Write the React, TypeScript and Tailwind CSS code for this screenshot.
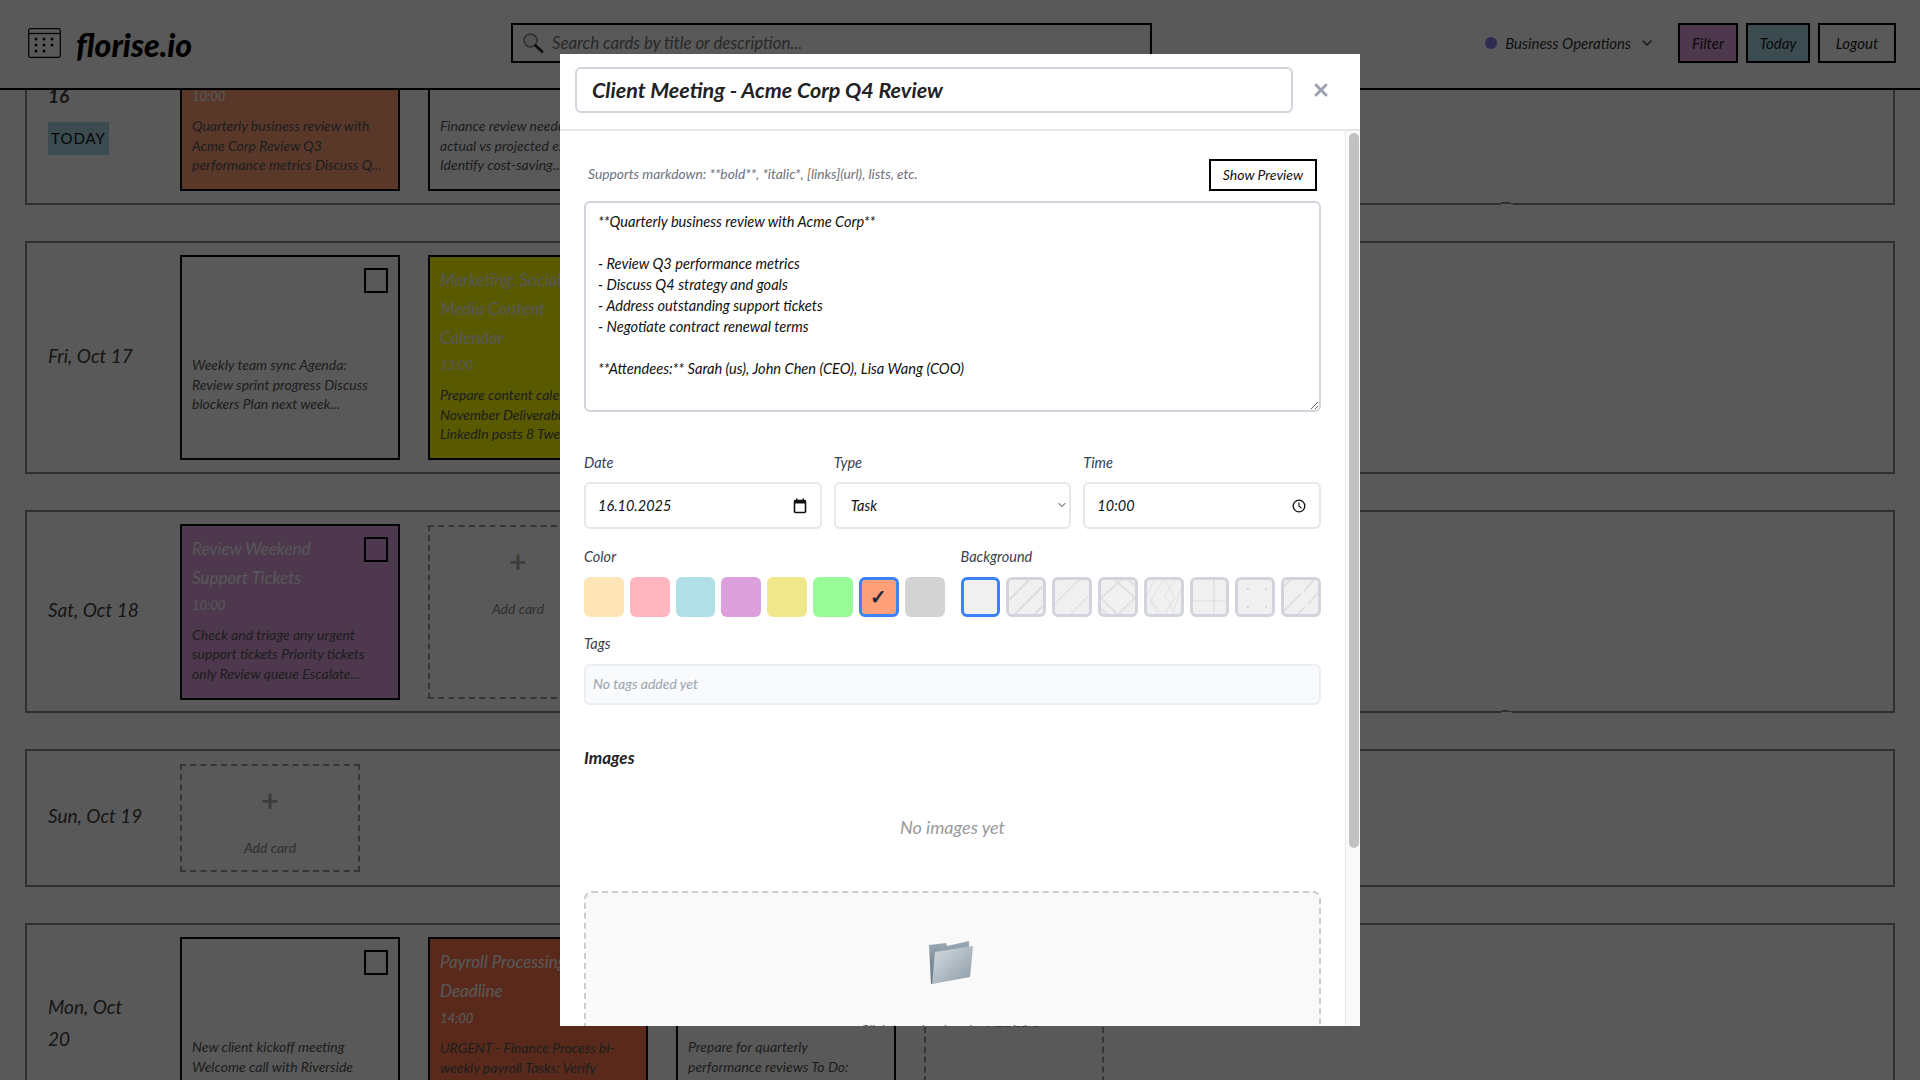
import React from "react";
import { X, ChevronDown } from "lucide-react";

const rowCls = "relative flex items-center pl-[23px] pr-[14px] py-[12px] gap-[28px] shrink-0";
const rowEdge = "absolute inset-0 border-2 border-[#8a8a8a] pointer-events-none [filter:url(#rough)]";
const cardBase = "relative w-[220px] shrink-0 px-[12px] py-[10px]";
const cardEdge = "absolute inset-0 border-2 border-[#111] pointer-events-none [filter:url(#rough)]";
const titleCls = "text-[17px] leading-[29px] text-[#fafaff]";
const timeCls = "text-[13px] leading-[20px] mt-[3px] text-[#fafaff]";
const descCls = "text-[14px] leading-[19.5px] text-[#555]";
const dateCls = "w-[104px] shrink-0 text-[19px] leading-[32px] text-[#404040] mb-[4px]";

function Check() {
  return <div className="absolute top-[13px] right-[12px] w-[24px] h-[25px] border-2 border-black" />;
}

function Card({ bg, title, time, desc, h, check = true, topGap = 0 }: { bg: string; title?: string[]; time?: string; desc: string[]; h: string; check?: boolean; topGap?: number }) {
  return (
    <div className={`${cardBase} ${bg} ${h}`}>
      <div className={cardEdge} />
      {check && <Check />}
      {title && title.map((t) => <div key={t} className={titleCls}>{t}</div>)}
      {time && <div className={timeCls}>{time}</div>}
      <div className={descCls} style={{ marginTop: topGap || 10 }}>
        {desc.map((d) => <div key={d} className="whitespace-nowrap overflow-hidden">{d}</div>)}
      </div>
    </div>
  );
}

function AddCard({ h, w = "w-[180px]" }: { h: string; w?: string }) {
  return (
    <div className={`relative ${w} ${h} shrink-0 flex flex-col items-center pt-[16px]`}>
      <div className="absolute inset-0 border-2 border-dashed border-[#999] pointer-events-none [filter:url(#rough)]" />
      <div className="text-[30px] leading-[40px] not-italic font-bold text-[#b0b0b0]">+</div>
      <div className="text-[14px] leading-[20px] mt-[18px] text-[#888]">Add card</div>
    </div>
  );
}

function Pattern({ children }: { children?: React.ReactNode }) {
  return (
    <div className="h-[40px] rounded-[6px] border-[3px] border-[#d1d5db] bg-[#f0f0f0] overflow-hidden">
      <svg viewBox="0 0 34 34" className="w-full h-full" fill="none" stroke="#dddddd">{children}</svg>
    </div>
  );
}

function Field({ label, children }: { label: string; children: React.ReactNode }) {
  return (
    <div>
      <div className="text-[14.5px] leading-[20px] text-[#374151] mb-[9px]">{label}</div>
      {children}
    </div>
  );
}

const swatches = ["bg-[#FFE4B5]", "bg-[#FFB6C1]", "bg-[#B0E0E6]", "bg-[#DDA0DD]", "bg-[#F0E68C]", "bg-[#98FB98]"];
const boxCls = "h-[47px] border-2 border-[#e5e7eb] rounded-[6px] bg-white flex items-center justify-between px-[12px] text-[14.5px] text-[#111]";

export default function App() {
  return (
    <div className="relative w-[1920px] h-[1080px] overflow-hidden bg-white flex flex-col italic [font-family:Lato,sans-serif]">
      <svg width="0" height="0" className="absolute">
        <filter id="rough" x="-2%" y="-2%" width="104%" height="104%">
          <feTurbulence type="fractalNoise" baseFrequency="0.012" numOctaves="1" seed="4" />
          <feDisplacementMap in="SourceGraphic" scale="2" />
        </filter>
      </svg>
      <header className="relative z-10 h-[90px] shrink-0 bg-white border-b-2 border-black flex items-center pl-[28px] pr-[24px]">
        <svg width="33" height="30" viewBox="0 0 33 30" fill="none" className="mb-[3px]">
          <rect x="0.7" y="0.7" width="31.6" height="28.6" rx="1.5" stroke="#111" strokeWidth="1.3" />
          <line x1="1" y1="5.5" x2="32" y2="5.5" stroke="#111" strokeWidth="1.3" />
          {[[8, 11], [16, 11], [24, 11], [8, 17], [16, 17], [24, 17], [8, 23], [16, 23]].map(([x, y]) => (
            <circle key={`${x}-${y}`} cx={x} cy={y} r="1.5" fill="#111" />
          ))}
        </svg>
        <div className="ml-[15px] w-[435px] text-[32px] leading-[40px] font-black text-black mt-[2px]">florise.io</div>
        <div className="w-[641px] h-[40px] border-2 border-black flex items-center pl-[9px] mb-[2px]">
          <svg width="22" height="22" viewBox="0 0 22 22" fill="none">
            <circle cx="8.5" cy="8.5" r="6.5" stroke="#888" strokeWidth="1.6" fill="#e8eef2" />
            <line x1="13.5" y1="13.5" x2="20" y2="19.5" stroke="#333" strokeWidth="3" strokeLinecap="round" />
          </svg>
          <input className="ml-[8px] flex-1 outline-none text-[16.8px] italic placeholder:text-[#757575]" placeholder="Search cards by title or description..." />
        </div>
        <div className="flex-1" />
        <div className="flex items-center mb-[2px]">
          <div className="w-[12px] h-[12px] rounded-full bg-[#8080f0]" />
          <div className="ml-[8px] text-[15px] text-[#333]">Business Operations</div>
          <ChevronDown size={16} strokeWidth={2} className="ml-[8px] text-[#333]" />
          <div className="ml-[23px] flex gap-[8px]">
            <div className="w-[60px] h-[40px] border-2 border-black bg-[#DDA0DD] flex items-center justify-center text-[15px] text-[#222]">Filter</div>
            <div className="w-[64px] h-[40px] border-2 border-black bg-[#ADD8E6] flex items-center justify-center text-[15px] text-[#222]">Today</div>
            <div className="w-[78px] h-[40px] border-2 border-black bg-white flex items-center justify-center text-[15px] text-[#222]">Logout</div>
          </div>
        </div>
      </header>

      <main className="flex-1 min-h-0 overflow-hidden px-[25px]">
        <div className="-mt-[89px] flex flex-col gap-[36px]">
          <div className={`${rowCls} h-[204px]`}>
            <div className={rowEdge} />
            <div className={dateCls}>
              <div>Thu, Oct</div>
              <div className="font-bold">16</div>
              <div className="mt-[10px] w-[61px] h-[33px] bg-[#ADD8E6] flex items-center justify-center not-italic text-[15px] tracking-[1px] text-[#111]">TODAY</div>
            </div>
            <Card bg="bg-[#FFA07A]" h="h-[176px]" title={["Client Meeting - Acme", "Corp Q4 Review"]} time="10:00" desc={["Quarterly business review with", "Acme Corp Review Q3", "performance metrics Discuss Q..."]} />
            <Card bg="bg-white" h="h-[176px]" title={["Budget Review"]} desc={["Finance review needed", "actual vs projected expenses", "Identify cost-saving..."]} topGap={62} check={false} />
          </div>
          <div className={`${rowCls} h-[233px]`}>
            <div className={rowEdge} />
            <div className={dateCls}>Fri, Oct 17</div>
            <Card bg="bg-white" h="h-[205px]" desc={["Weekly team sync Agenda:", "Review sprint progress Discuss", "blockers Plan next week..."]} topGap={90} />
            <Card bg="bg-[#FFFF00]" h="h-[205px]" title={["Marketing: Social", "Media Content", "Calendar"]} time="13:00" desc={["Prepare content calendar for", "November Deliverables", "LinkedIn posts 8 Tweets"]} />
          </div>
          <div className={`${rowCls} h-[203px]`}>
            <div className={rowEdge} />
            <div className={dateCls}>Sat, Oct 18</div>
            <Card bg="bg-[#DDA0DD]" h="h-[176px]" title={["Review Weekend", "Support Tickets"]} time="10:00" desc={["Check and triage any urgent", "support tickets Priority tickets", "only Review queue Escalate..."]} />
            <AddCard h="h-[174px]" />
          </div>
          <div className={`${rowCls} h-[138px]`}>
            <div className={rowEdge} />
            <div className={dateCls}>Sun, Oct 19</div>
            <AddCard h="h-[108px]" />
          </div>
          <div className={`${rowCls} h-[204px]`}>
            <div className={rowEdge} />
            <div className={dateCls}>
              <div>Mon, Oct</div>
              <div>20</div>
            </div>
            <Card bg="bg-white" h="h-[176px]" desc={["New client kickoff meeting", "Welcome call with Riverside", "Introduce team and timeline"]} topGap={90} />
            <Card bg="bg-[#FF7A4D]" h="h-[176px]" title={["Payroll Processing", "Deadline"]} time="14:00" desc={["URGENT - Finance Process bi-", "weekly payroll Tasks: Verify", "hours and submit"]} />
            <Card bg="bg-white" h="h-[176px]" check={false} desc={["Prepare for quarterly", "performance reviews To Do:", "Gather metrics and KPIs"]} topGap={90} />
            <AddCard h="h-[174px]" />
          </div>
        </div>
      </main>

      <div className="absolute inset-0 z-20 bg-black/65 flex items-center justify-center">
        <div className="w-[800px] h-[972px] bg-white flex flex-col overflow-hidden">
          <div className="h-[77px] shrink-0 border-b-2 border-[#e5e7eb] flex items-start pl-[15px] pt-[13px]">
            <div className="w-[718px] h-[46px] border-2 border-[#d1d5db] rounded-[6px] flex items-center pl-[15px] text-[21.5px] font-bold text-[#222]">Client Meeting - Acme Corp Q4 Review</div>
            <X size={20} strokeWidth={3.5} className="ml-[18px] mt-[13px] text-[#9ca3af]" />
          </div>
          <div className="flex-1 min-h-0 flex">
            <div className="flex-1 min-w-0 overflow-hidden px-[24px] pt-[28px]">
              <div className="flex items-center justify-between pl-[4px] pr-[4px]">
                <div className="text-[13.8px] text-[#6b7280] mb-[2px]">Supports markdown: **bold**, *italic*, [links](url), lists, etc.</div>
                <div className="w-[108px] h-[32px] border-2 border-black flex items-center justify-center text-[14px] leading-[18px] text-[#111]">Show Preview</div>
              </div>
              <textarea
                readOnly
                className="mt-[10px] block w-full h-[211px] border-2 border-[#d1d5db] rounded-[6px] px-[12px] py-[8px] text-[14.6px] leading-[21px] italic text-[#111] outline-none"
                defaultValue={"**Quarterly business review with Acme Corp**\n\n- Review Q3 performance metrics\n- Discuss Q4 strategy and goals\n- Address outstanding support tickets\n- Negotiate contract renewal terms\n\n**Attendees:** Sarah (us), John Chen (CEO), Lisa Wang (COO)"}
              />
              <div className="mt-[41px] grid grid-cols-3 gap-[12px]">
                <Field label="Date">
                  <div className={boxCls}>
                    <span>16.10.2025</span>
                    <svg width="14" height="16" viewBox="0 0 14 16" fill="none" className="mr-[1px]">
                      <rect x="1.5" y="2.5" width="11" height="12" rx="1" stroke="#111" strokeWidth="1.6" />
                      <rect x="1" y="2" width="12" height="3.5" fill="#111" />
                      <rect x="3" y="0.5" width="1.5" height="2" fill="#111" />
                      <rect x="9.5" y="0.5" width="1.5" height="2" fill="#111" />
                    </svg>
                  </div>
                </Field>
                <Field label="Type">
                  <div className="relative">
                    <select className="appearance-none h-[47px] w-full border-2 border-[#e5e7eb] rounded-[6px] bg-white pl-[15px] pr-[2px] text-[14.5px] italic text-[#111] outline-none" defaultValue="Task">
                      <option>Task</option>
                      <option>Meeting</option>
                    </select>
                    <ChevronDown size={12} strokeWidth={1.8} className="absolute right-[3px] top-[17px] text-[#222]" />
                  </div>
                </Field>
                <Field label="Time">
                  <div className={boxCls}>
                    <span>10:00</span>
                    <svg width="14" height="14" viewBox="0 0 14 14" fill="none" className="mr-[1px]">
                      <circle cx="7" cy="7" r="5.8" stroke="#111" strokeWidth="1.3" />
                      <path d="M7 3.5V7L9.5 9.3" stroke="#111" strokeWidth="1.1" />
                    </svg>
                  </div>
                </Field>
              </div>
              <div className="mt-[18px] grid grid-cols-2 gap-[16px]">
                <div>
                  <div className="text-[14.5px] leading-[20px] text-[#374151] mb-[10px]">Color</div>
                  <div className="grid grid-cols-8 gap-[6px]">
                    {swatches.map((s) => <div key={s} className={`h-[40px] rounded-[6px] ${s}`} />)}
                    <div className="h-[40px] rounded-[6px] bg-[#FFA07A] border-[3px] border-[#3b82f6] flex items-center justify-center not-italic text-[20px] pb-[3px] font-bold text-[#1f2937]">✓</div>
                    <div className="h-[40px] rounded-[6px] bg-[#D3D3D3]" />
                  </div>
                </div>
                <div>
                  <div className="text-[14.5px] leading-[20px] text-[#374151] mb-[10px]">Background</div>
                  <div className="grid grid-cols-8 gap-[6px]">
                    <div className="h-[40px] rounded-[6px] border-[3px] border-[#3b82f6] bg-[#f0f0f0]" />
                    <Pattern><path d="M20 0L0 20M34 6L6 34M34 26L26 34" strokeWidth="2" /></Pattern>
                    <Pattern><path d="M24 0L0 24M34 16L16 34" strokeWidth="1.4" /></Pattern>
                    <Pattern><path d="M20 0L0 18L16 34M14 0L34 18L18 34M28 0L34 6M0 28L6 34" strokeWidth="1.6" /></Pattern>
                    <Pattern><path d="M8 0L0 14L10 34M16 0L4 20L14 34M18 0L28 18L18 34M28 0L18 16L28 34M34 8L26 34" strokeWidth="0.8" /></Pattern>
                    <Pattern><path d="M21 0V34M0 21H34" strokeWidth="1.2" /></Pattern>
                    <Pattern><g fill="#cccccc" stroke="none"><circle cx="10" cy="9" r="1" /><circle cx="28" cy="9" r="1" /><circle cx="10" cy="27" r="1" /><circle cx="28" cy="27" r="1" /></g></Pattern>
                    <Pattern><path d="M6 0L0 6M30 0L20 11M17 14L0 31M34 13L24 24M21 27L14 34" strokeWidth="1.6" /></Pattern>
                  </div>
                </div>
              </div>
              <div className="mt-[17px] text-[14.5px] leading-[20px] text-[#374151]">Tags</div>
              <div className="mt-[10px] h-[41px] border-2 border-[#eceef1] rounded-[6px] bg-[#f9fafb] flex items-center pl-[7px] pb-[2px] text-[14px] text-[#9ca3af]">No tags added yet</div>
              <div className="mt-[41px] text-[17px] leading-[24px] font-bold text-[#222]">Images</div>
              <div className="mt-[45px] text-center text-[18px] leading-[24px] text-[#999]">No images yet</div>
              <div className="mt-[52px] h-[300px] border-2 border-dashed border-[#ccc] rounded-[8px] bg-[#f9f9f9] flex flex-col items-center pt-[48px]">
                <svg width="44" height="44" viewBox="0 0 44 44" className="-ml-[3px]">
                  <defs>
                    <linearGradient id="fb" x1="0" y1="0" x2="0" y2="1"><stop offset="0" stopColor="#9aaab6" /><stop offset="1" stopColor="#5f7080" /></linearGradient>
                    <linearGradient id="ff" x1="0" y1="0" x2="1" y2="1"><stop offset="0" stopColor="#d6dde2" /><stop offset="1" stopColor="#8b9aa6" /></linearGradient>
                  </defs>
                  <path d="M0 4L17 2L18 5L40 0L40 34L2 43Z" fill="url(#fb)" />
                  <path d="M6 11L44 5L41 36L3 43Z" fill="url(#ff)" />
                </svg>
                <div className="mt-[34px] text-[14px] text-[#666]">Click to upload or drag and drop</div>
              </div>
            </div>
            <div className="w-[15px] shrink-0 bg-[#fafafa] border-l border-[#e8e8e8] pl-[3px] pt-[2px]">
              <div className="w-[10px] h-[715px] rounded-full bg-[#c1c1c1]" />
            </div>
          </div>
        </div>
      </div>
    </div>
  );
}
